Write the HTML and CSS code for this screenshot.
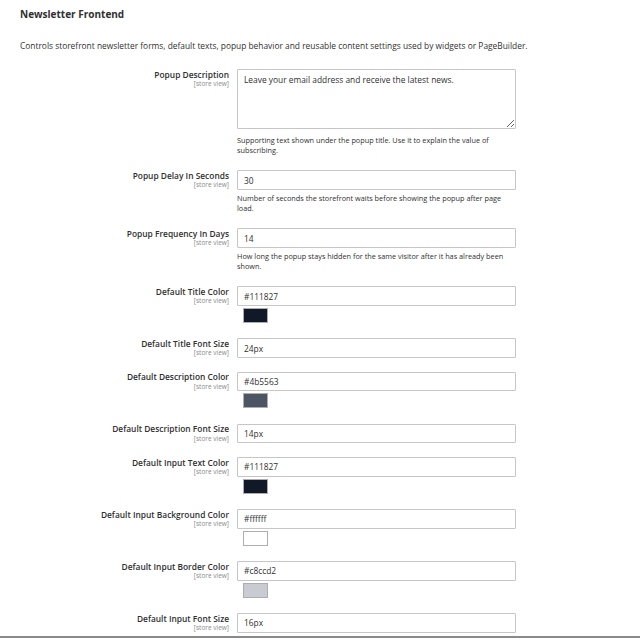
FILE: index.html
```html
<!DOCTYPE html>
<html>
<head>
<meta charset="utf-8">
<link rel="stylesheet" href="styles.css">
</head>
<body>
<div class="page">
  <h2 class="title">Newsletter Frontend</h2>
  <p class="intro">Controls storefront newsletter forms, default texts, popup behavior and reusable content settings used by widgets or PageBuilder.</p>
  <div class="form">
    <div class="row">
      <div class="label"><span class="name">Popup Description</span><span class="scope">[store view]</span></div>
      <div class="control">
        <textarea class="textarea">Leave your email address and receive the latest news.</textarea>
        <p class="note note-first">Supporting text shown under the popup title. Use it to explain the value of subscribing.</p>
      </div>
    </div>
    <div class="row">
      <div class="label"><span class="name">Popup Delay In Seconds</span><span class="scope">[store view]</span></div>
      <div class="control">
        <input class="input" value="30">
        <p class="note">Number of seconds the storefront waits before showing the popup after page load.</p>
      </div>
    </div>
    <div class="row">
      <div class="label"><span class="name">Popup Frequency In Days</span><span class="scope">[store view]</span></div>
      <div class="control">
        <input class="input" value="14">
        <p class="note">How long the popup stays hidden for the same visitor after it has already been shown.</p>
      </div>
    </div>
    <div class="row">
      <div class="label"><span class="name">Default Title Color</span><span class="scope">[store view]</span></div>
      <div class="control">
        <input class="input" value="#111827">
        <div class="swatch" style="background:#111827"></div>
      </div>
    </div>
    <div class="row">
      <div class="label"><span class="name">Default Title Font Size</span><span class="scope">[store view]</span></div>
      <div class="control"><input class="input" value="24px"></div>
    </div>
    <div class="row">
      <div class="label"><span class="name">Default Description Color</span><span class="scope">[store view]</span></div>
      <div class="control">
        <input class="input" value="#4b5563">
        <div class="swatch" style="background:#4b5563"></div>
      </div>
    </div>
    <div class="row">
      <div class="label"><span class="name">Default Description Font Size</span><span class="scope">[store view]</span></div>
      <div class="control"><input class="input" value="14px"></div>
    </div>
    <div class="row">
      <div class="label"><span class="name">Default Input Text Color</span><span class="scope">[store view]</span></div>
      <div class="control">
        <input class="input" value="#111827">
        <div class="swatch" style="background:#111827"></div>
      </div>
    </div>
    <div class="row">
      <div class="label"><span class="name">Default Input Background Color</span><span class="scope">[store view]</span></div>
      <div class="control">
        <input class="input" value="#ffffff">
        <div class="swatch" style="background:#ffffff"></div>
      </div>
    </div>
    <div class="row">
      <div class="label"><span class="name">Default Input Border Color</span><span class="scope">[store view]</span></div>
      <div class="control">
        <input class="input" value="#c8ccd2">
        <div class="swatch" style="background:#c8ccd2"></div>
      </div>
    </div>
    <div class="row">
      <div class="label"><span class="name">Default Input Font Size</span><span class="scope">[store view]</span></div>
      <div class="control"><input class="input" value="16px"></div>
    </div>
  </div>
</div>
<div class="bottom-line"></div>
</body>
</html>
```
FILE: styles.css
```css
html, body {
  margin: 0;
  padding: 0;
  background: #ffffff;
  font-family: "Open Sans", "Liberation Sans", sans-serif;
  color: #303030;
  overflow: hidden;
  height: 640px;
}
.page {
  padding: 7px 20px 0 20px;
}
.title {
  margin: 0;
  font-size: 10px;
  font-weight: 700;
  line-height: 14px;
  color: #303030;
}
.intro {
  margin: 19px 0 0 0;
  font-size: 8.4px;
  line-height: 12px;
  color: #303030;
}
.form {
  margin-top: 17px;
  display: flex;
  flex-direction: column;
}
.row {
  display: grid;
  grid-template-columns: 209px 279px;
  column-gap: 8px;
  margin-bottom: 13.8px;
}
.label {
  display: flex;
  flex-direction: column;
  align-items: flex-end;
  text-align: right;
  padding-top: 0.5px;
}
.name {
  font-size: 8.4px;
  font-weight: 600;
  line-height: 10px;
  color: #303030;
  white-space: nowrap;
}
.scope {
  font-size: 6.5px;
  line-height: 8px;
  margin-top: 0.5px;
  color: #8a8a8a;
}
.control {
  display: flex;
  flex-direction: column;
}
.textarea, .input {
  box-sizing: border-box;
  width: 279px;
  border: 1px solid #c6c6c6;
  border-radius: 1px;
  font-family: "Open Sans", "Liberation Sans", sans-serif;
  font-size: 8.4px;
  color: #303030;
  margin: 0;
  outline: none;
  background: #fff;
}
.textarea {
  height: 60px;
  padding: 4px 6px;
  line-height: 12px;
  resize: vertical;
}
.input {
  height: 19.6px;
  padding: 0 6px;
}
.note {
  margin: 3px 0 1.6px 0;
  font-size: 7.3px;
  line-height: 10px;
  color: #303030;
  width: 272px;
}
.note-first {
  margin-top: 6px;
}
.swatch {
  box-sizing: border-box;
  width: 25px;
  height: 15px;
  margin: 2px 0 1.6px 6px;
  border: 1px solid #adadad;
}
.bottom-line {
  position: absolute;
  left: 0;
  top: 636px;
  width: 640px;
  height: 2px;
  background: #8a8a8a;
}
```
